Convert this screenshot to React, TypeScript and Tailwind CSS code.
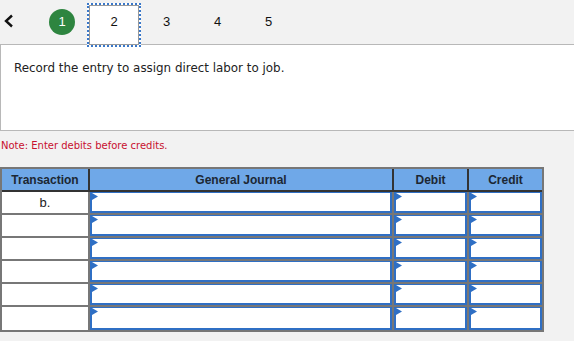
import React from "react";

const Flag = () => (
  <svg width="7" height="8" viewBox="0 0 7 8" className="absolute left-0 top-0">
    <polygon points="0,0 6,3.5 0,7" fill="#2f6fc4" />
  </svg>
);

const InputCell = () => (
  <div className="relative h-full border-x-2 border-b-2 border-t border-[#2f6fc4] bg-white">
    <Flag />
  </div>
);

export default function App() {
  const rows = ["b.", "", "", "", "", ""];
  return (
    <div className="w-[574px] h-[341px] bg-[#f2f2f2] overflow-hidden" style={{ fontFamily: '"Liberation Sans", Arial, sans-serif' }}>
      {/* nav */}
      <div className="relative flex h-[44px] items-center">
        <svg width="12" height="14" viewBox="0 0 12 14" className="ml-[3px] mt-[-3px]">
          <polyline points="9,1.5 3,7 9,12.5" fill="none" stroke="#111" strokeWidth="2.4" />
        </svg>
        <div className="ml-[34px] mt-[-1px] flex h-[26px] w-[26px] items-center justify-center rounded-full bg-[#2e8540] text-[13px] text-white">1</div>
        <div className="ml-[12px] mt-[6px] flex h-[44px] w-[54px] items-center justify-center border-2 border-dotted border-[#3a78c9] bg-white">
          <div className="flex h-full w-full items-start justify-center border border-[#9a9a9a] pt-[6px] text-[13px] text-[#111]">2</div>
        </div>
        <div className="flex w-[51px] justify-center text-[13px] text-[#111] mt-[-1px]">3</div>
        <div className="flex w-[51px] justify-center text-[13px] text-[#111] mt-[-1px]">4</div>
        <div className="flex w-[51px] justify-center text-[13px] text-[#111] mt-[-1px]">5</div>
      </div>
      {/* question box */}
      <div className="h-[87px] w-[576px] border border-[#b8b8b8] bg-white pl-[13px] pt-[15px] text-[11.9px] text-[#222]" style={{ fontFamily: '"DejaVu Sans", Verdana, sans-serif' }}>
        Record the entry to assign direct labor to job.
      </div>
      <div className="mt-[7px] pl-[1px] text-[10px] text-[#c8102e]" style={{ fontFamily: '"DejaVu Sans", Verdana, sans-serif' }}>
        Note: Enter debits before credits.
      </div>
      {/* table */}
      <div className="mt-[14px] w-[544px] border-2 border-[#777] border-b-2">
        <div className="grid h-[23px] grid-cols-[88px_304px_75px_73px] border-b-2 border-[#333] bg-[#6fa8e8] text-[12px] font-bold text-[#1c2733]">
          <div className="flex items-center justify-center border-r-2 border-[#333]">Transaction</div>
          <div className="flex items-center justify-center border-r-2 border-[#333]">General Journal</div>
          <div className="flex items-center justify-center border-r-2 border-[#333]">Debit</div>
          <div className="flex items-center justify-center">Credit</div>
        </div>
        {rows.map((r, i) => (
          <div key={i} className={`grid h-[23px] grid-cols-[88px_304px_75px_73px] ${i < rows.length - 1 ? "border-b-2 border-[#777]" : ""}`}>
            <div className="flex items-center justify-center border-r-2 border-[#777] bg-white text-[13px] text-[#222]">{r}</div>
            <div className="border-r-2 border-[#777]"><InputCell /></div>
            <div className="border-r-2 border-[#777]"><InputCell /></div>
            <div><InputCell /></div>
          </div>
        ))}
      </div>
    </div>
  );
}
